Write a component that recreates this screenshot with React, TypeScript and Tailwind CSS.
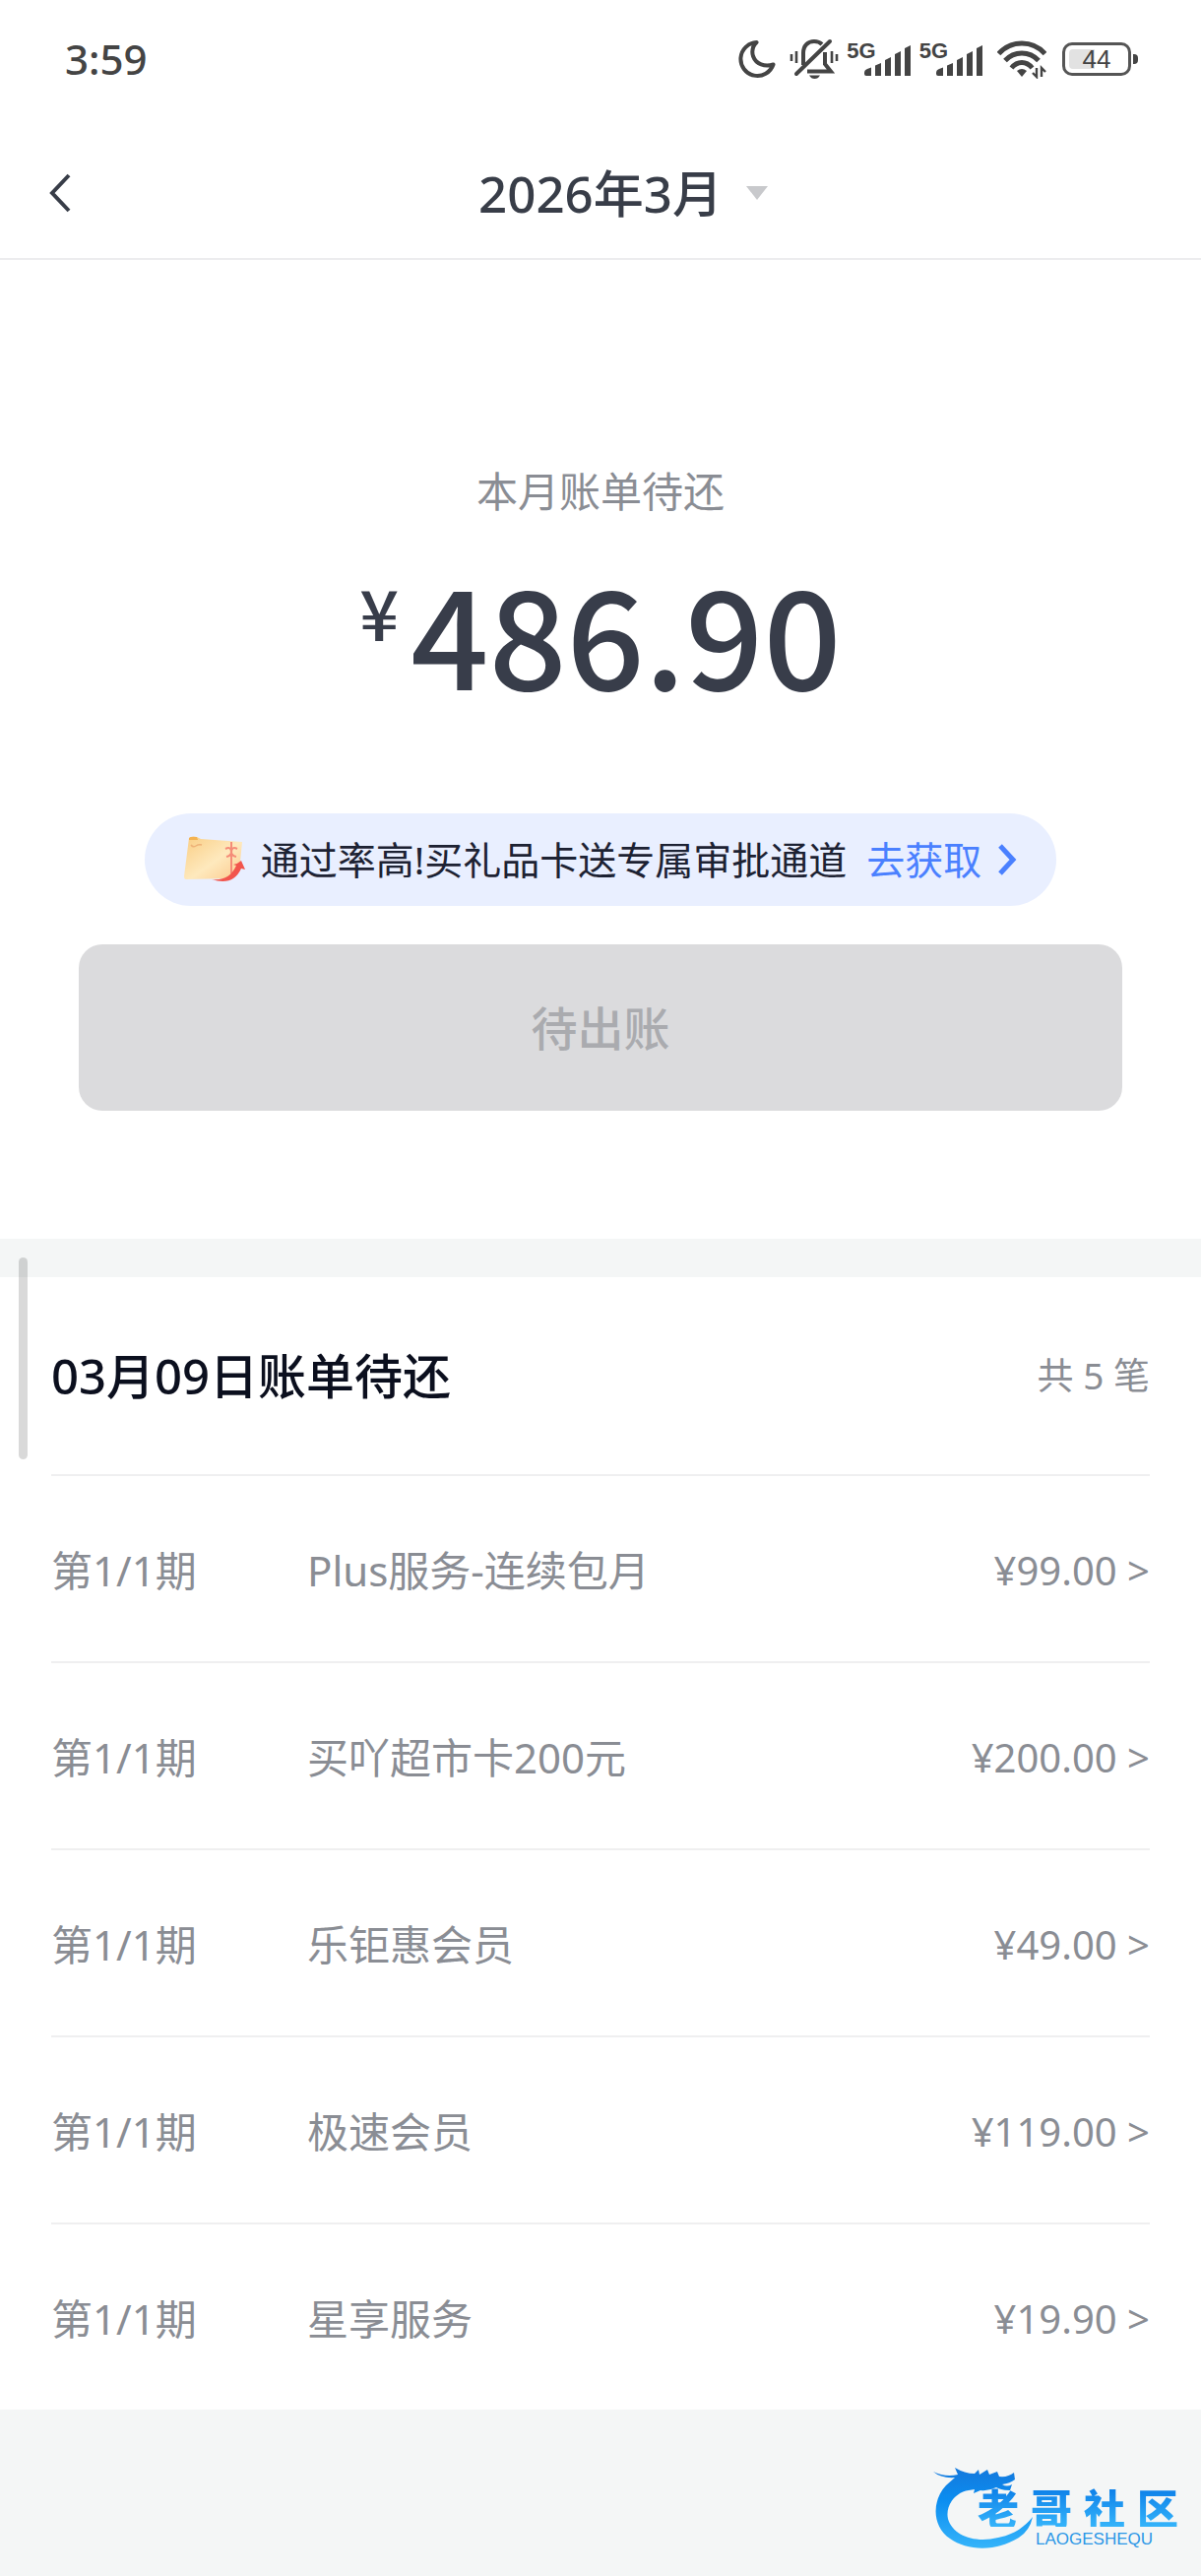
import React from 'react';

interface BillItem {
  id: number;
  period: string;
  name: string;
  amount: string;
}

const BILLS: BillItem[] = [
  { id: 1, period: '第1/1期', name: 'Plus服务-连续包月', amount: '¥99.00' },
  { id: 2, period: '第1/1期', name: '买吖超市卡200元', amount: '¥200.00' },
  { id: 3, period: '第1/1期', name: '乐钜惠会员', amount: '¥49.00' },
  { id: 4, period: '第1/1期', name: '极速会员', amount: '¥119.00' },
  { id: 5, period: '第1/1期', name: '星享服务', amount: '¥19.90' },
];

const Signal: React.FC = () => (
  <div className="flex items-start">
    <span className="-mr-3 font-['Liberation_Sans'] text-[22px] leading-5 font-bold">5G</span>
    <svg className="w-12 h-8 mt-1" viewBox="0 0 48 32" fill="currentColor">
      <path d="M0 28q0-3 3-4l4-1.500V31H2q-2 0-2-2zM11 20.500l6-2.500v13h-6zM21 15l6-3v19h-6zM31 9l6-3v25h-6zM41 3l6-3v31h-6z" />
    </svg>
  </div>
);

const StatusBar: React.FC = () => (
  <div className="h-[130px] pl-[66px] pr-16 pb-2.5 flex items-center justify-between text-[#444]">
    <span className="text-[42px] leading-[60px] font-medium">3:59</span>
    <div className="flex items-center">
      <svg className="w-10 h-10" viewBox="0 0 40 40" fill="none" stroke="currentColor" strokeWidth="4" strokeLinejoin="round">
        <path d="M20.500 3A17 17 0 1 0 37.500 25.500C29 28 20 25.500 17 17C15.500 12 17 6.500 20.500 3z" />
      </svg>
      <svg className="w-[50px] h-[42px] ml-3.5" viewBox="0 0 50 42" fill="none" stroke="currentColor" strokeWidth="4">
        <path d="M14 27V15C14 7 19 3 25 3C28.500 3 31 4 33 6M18 33.500H42L36 26V14" />
        <path d="M7 36L41 3" strokeLinecap="round" />
        <path d="M2 16v7M7 13v12M43 13v12M48 16v7" strokeWidth="2.600" />
        <path d="M20 37.500h11q-2 3.500-5.500 3.500T20 37.500z" fill="currentColor" stroke="none" />
      </svg>
      <div className="flex gap-2 ml-2">
        <Signal />
        <Signal />
      </div>
      <svg className="w-[50px] h-10 ml-3.5" viewBox="0 0 50 40" fill="none" stroke="currentColor" strokeWidth="5">
        <path d="M1.500 14.500Q11 4 25 4T48.500 14.500" />
        <path d="M8 21.500Q15 14 25 14T42 21.500" />
        <path d="M14.500 29Q19 23.500 25 23.500T35.500 29" />
        <path d="M20 32q5-4 10 0l-5 6z" fill="currentColor" stroke="none" />
        <path d="M40 29v9l-4-4M45 38v-9l4 4" strokeWidth="2.400" />
      </svg>
      <div className="flex items-center ml-4">
        <div className="relative w-[70px] h-[34px] rounded-[10px] border-3 border-[#555] flex items-center justify-center overflow-hidden">
          <div className="absolute left-1 inset-y-1 w-[26px] rounded-l bg-[#e2e2e2]" />
          <span className="relative font-['Liberation_Sans'] text-[26px] leading-none">44</span>
        </div>
        <div className="w-[5px] h-2.5 ml-0.5 rounded-r bg-[#444]" />
      </div>
    </div>
  </div>
);

const TitleBar: React.FC = () => (
  <header className="grid grid-cols-[1fr_auto_1fr] items-center h-[134px] border-b-2 border-[#ececee] text-[#383d48]">
    <button aria-label="返回" className="w-20 pl-12">
      <svg className="w-6 h-10" viewBox="0 0 24 40" fill="none" stroke="currentColor" strokeWidth="4">
        <path d="M22 2L5 20l17 18" />
      </svg>
    </button>
    <h1 className="text-[51px] leading-[70px] font-medium">2026年3月</h1>
    <button aria-label="选择月份" className="w-16 pl-6">
      <svg className="w-[22px] h-3.5" viewBox="0 0 22 14" fill="#c8c9cc">
        <path d="M0 0h22L11 14z" />
      </svg>
    </button>
  </header>
);

const GiftCardIcon: React.FC = () => (
  <svg className="w-[62px] h-12" viewBox="0 0 62 48">
    <defs>
      <linearGradient id="card" x1="0" y1="0" x2="1" y2="1">
        <stop offset="0" stopColor="#f9cd83" />
        <stop offset="0.550" stopColor="#fee9bd" />
        <stop offset="1" stopColor="#fbc98c" />
      </linearGradient>
    </defs>
    <path d="M5 2q2-2 8-1l4 2 42 3-3 30-9 7L2 44q-2 0-2-3z" fill="url(#card)" />
    <path d="M5 2q2-2 8-1l1 3H5z" fill="#f4b352" />
    <path d="M7 9q2 3 5 1t6-1" fill="none" stroke="#eeb277" strokeWidth="1.500" />
    <path d="M48 6v32M42 13q6-3 6 4q0-7 6-4M43 21q5-1 5-5q0 4 5 5" fill="none" stroke="#f58c78" strokeWidth="2" />
    <path d="M28 44q18 2 25-14l-3-1q5-1 8-4l4 9-4-1q-8 18-30 11z" fill="#f2554d" />
  </svg>
);

const Summary: React.FC = () => (
  <section className="flex flex-col items-center bg-white px-20 pt-[205px] pb-[130px]">
    <p className="text-[42px] leading-[60px] text-[#8a8d94]">本月账单待还</p>
    <div className="flex items-start gap-3 mt-8 font-['Noto_Sans_CJK_SC',sans-serif] font-medium text-[#383d4a]">
      <span className="mt-5 text-[70px] leading-[80px]">¥</span>
      <span className="text-[139px] leading-[160px]">486.90</span>
    </div>
    <a href="#gift" className="flex items-center h-[94px] mt-[105px] px-10 rounded-full bg-[#e9efff] text-[39px] leading-[60px] text-[#1d2233]">
      <GiftCardIcon />
      <span className="ml-4">通过率高!买礼品卡送专属审批通道</span>
      <span className="ml-5 text-[#4a80ff]">去获取</span>
      <svg className="w-5 h-8 ml-4" viewBox="0 0 20 32" fill="none" stroke="#4a80ff" strokeWidth="5">
        <path d="M3 2l13 14L3 30" />
      </svg>
    </a>
    <button disabled className="w-full h-[169px] mt-[39px] rounded-3xl bg-[#dbdbdd] text-[47px] leading-[70px] font-medium text-[#aaabaf]">
      待出账
    </button>
  </section>
);

const BillRow: React.FC<{ bill: BillItem }> = ({ bill }) => (
  <li className="border-t-2 border-[#efeff0]">
    <button className="w-full h-[188px] pt-1 flex items-center text-left text-[42px] leading-[60px] text-[#8a8d94]">
      <span className="w-[260px]">{bill.period}</span>
      <span className="flex-1">{bill.name}</span>
      <span className="text-[40px]">{bill.amount} &gt;</span>
    </button>
  </li>
);

const Logo: React.FC = () => (
  <div className="relative w-[252px] h-[90px]">
    <svg className="absolute left-0 top-0 w-[104px] h-[88px]" viewBox="0 0 104 88">
      <defs>
        <linearGradient id="dragon" x1="0" y1="0" x2="0" y2="1">
          <stop offset="0" stopColor="#1478dc" />
          <stop offset="0.400" stopColor="#0b8df0" />
          <stop offset="1" stopColor="#35b4fa" />
        </linearGradient>
      </defs>
      <path
        d="M0 8q12 6 25 3l-3-7q10 6 20 6l4-4 1 5 8-5 2 5 8-3 2 5q9 1 15-4l1 7q-5 4-13 5 5 3 10 0l-2 6q-9 0-14-3-8 4-16 3l-7 3 1-4-6 1C22 29 12 43 15 56c5 17 27 25 51 19 16-3 27-11 35-21q-3 14-14 21C65 89 35 89 17 76-1 64-2 38 13 22l9-8Q8 15 0 8z"
        fill="url(#dragon)"
      />
    </svg>
    <div className="absolute left-[45px] top-6 flex gap-3 font-['Noto_Sans_CJK_SC',sans-serif] text-[42px] leading-[40px] font-black">
      {['老', '哥', '社', '区'].map((c) => (
        <span key={c} className="bg-linear-to-b from-[#0b7ee8] to-[#35b4fa] bg-clip-text text-transparent">{c}</span>
      ))}
    </div>
    <span className="absolute left-[104px] top-[69px] font-['Liberation_Sans',sans-serif] text-[17px] leading-4 text-[#2b97e6]">LAOGESHEQU</span>
  </div>
);

export default function App() {
  return (
    <div className="min-h-screen flex flex-col bg-[#f4f6f6] font-['Noto_Sans','Noto_Sans_CJK_SC',sans-serif]">
      <div className="bg-white">
        <StatusBar />
        <TitleBar />
      </div>
      <Summary />
      <section className="relative mt-[39px] bg-white px-[52px]">
        <div className="absolute left-[19px] -top-5 w-[9px] h-[205px] rounded-full bg-black/15" />
        <div className="h-[200px] flex items-center justify-between">
          <h2 className="text-[49px] leading-[70px] font-medium text-[#0b0f1e]">03月09日账单待还</h2>
          <span className="text-[37px] leading-[50px] text-[#8a8d94]">共 5 笔</span>
        </div>
        <ul>
          {BILLS.map((bill) => (
            <BillRow key={bill.id} bill={bill} />
          ))}
        </ul>
      </section>
      <footer className="flex-1 flex items-end justify-end pr-5 pb-6">
        <Logo />
      </footer>
    </div>
  );
}
